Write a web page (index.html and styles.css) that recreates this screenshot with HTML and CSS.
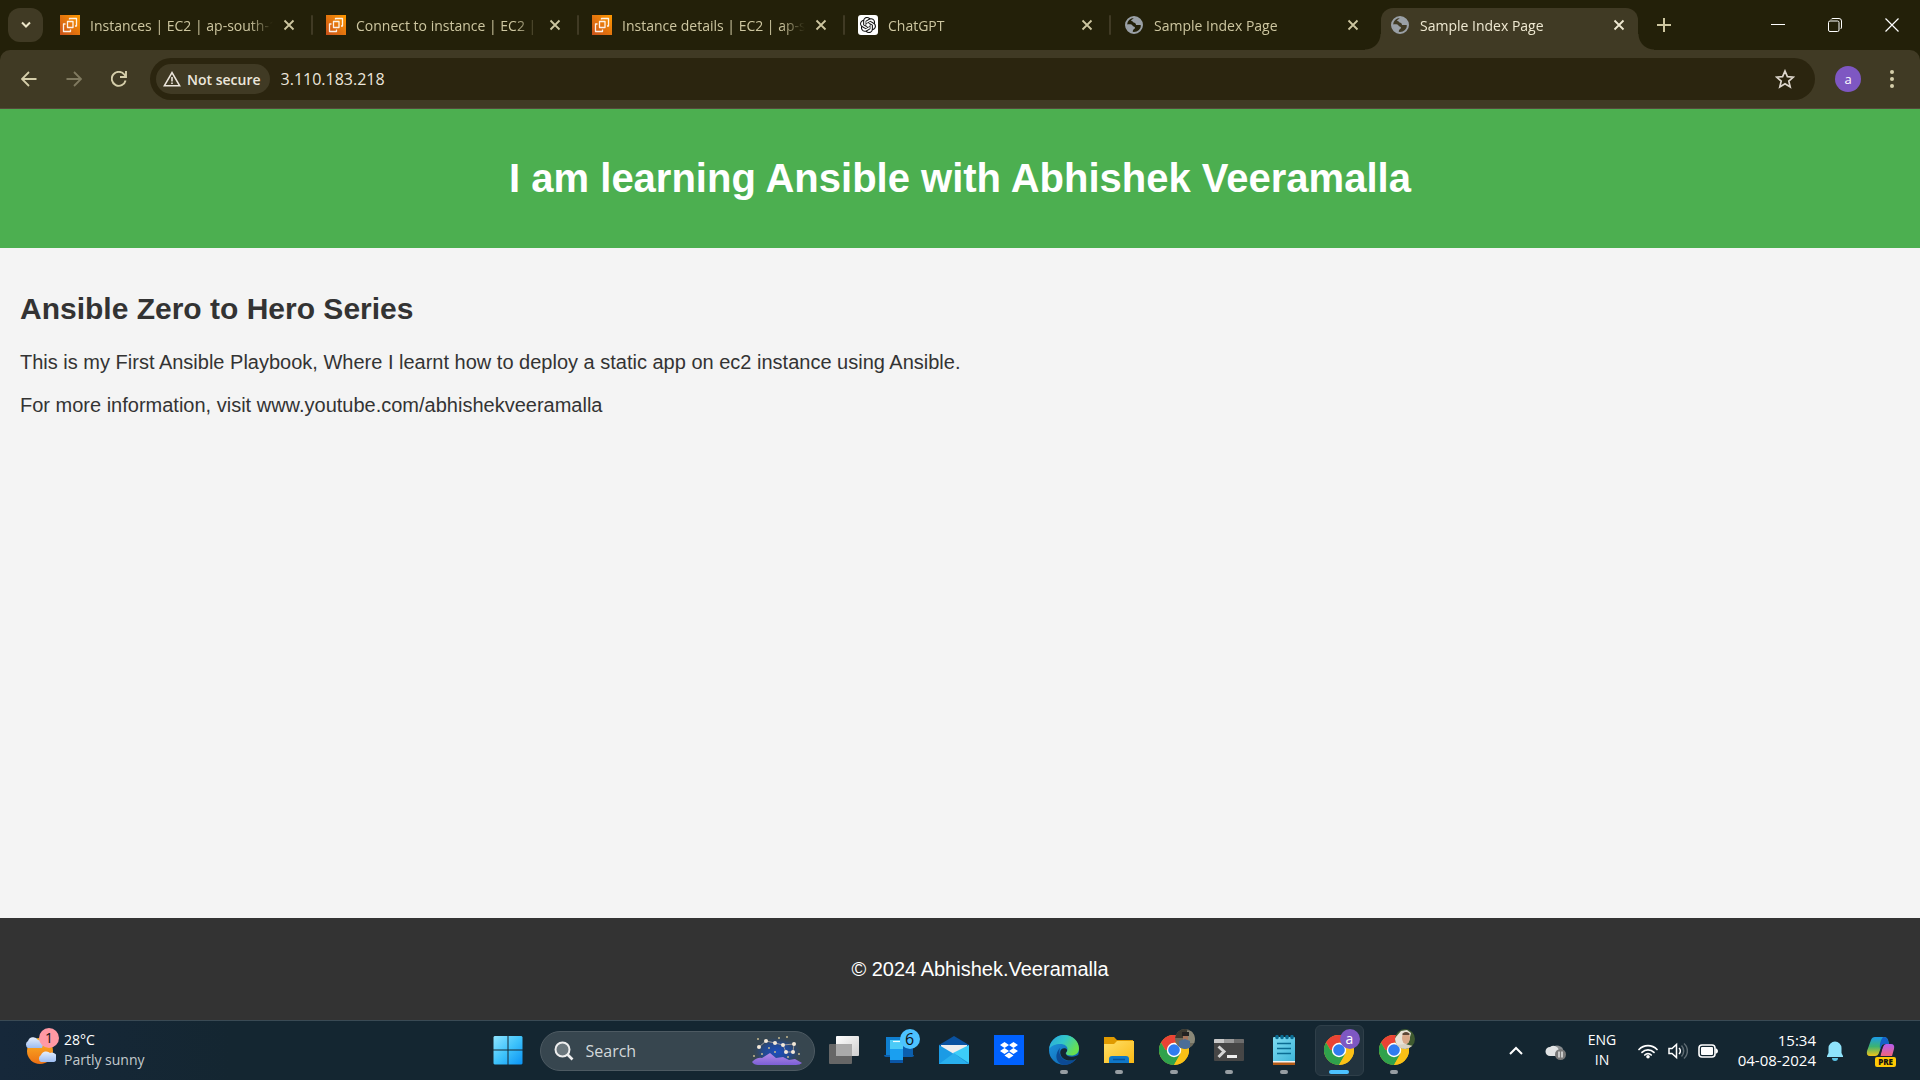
FILE: index.html
```html
<!DOCTYPE html>
<html lang="en">
<head>
<meta charset="utf-8">
<meta name="viewport" content="width=device-width, initial-scale=1">
<title>Sample Index Page</title>
<link rel="stylesheet" href="styles.css">
</head>
<body>
<svg class="defs" aria-hidden="true">
  <defs>
    <linearGradient id="gAws" x1="0" y1="1" x2="1" y2="0"><stop offset="0" stop-color="#c8511b"/><stop offset="1" stop-color="#ff9900"/></linearGradient>
    <linearGradient id="gWin" x1="0" y1="0" x2="1" y2="1"><stop offset="0" stop-color="#8fe4ff"/><stop offset=".5" stop-color="#3fc3fb"/><stop offset="1" stop-color="#0a93f5"/></linearGradient>
    <linearGradient id="gSun" x1="0" y1="0" x2="0" y2="1"><stop offset="0" stop-color="#fcb827"/><stop offset="1" stop-color="#ee7013"/></linearGradient>
    <linearGradient id="gCloud" x1="0" y1="0" x2="0" y2="1"><stop offset="0" stop-color="#e6effc"/><stop offset="1" stop-color="#9dbdf2"/></linearGradient>
    <linearGradient id="gWhite" x1="0" y1="0" x2="1" y2="1"><stop offset="0" stop-color="#fff"/><stop offset="1" stop-color="#cfcfcf"/></linearGradient>
    <linearGradient id="gHill" x1="0" y1="0" x2="0" y2="1"><stop offset="0" stop-color="#b48be8"/><stop offset="1" stop-color="#7c5fd6"/></linearGradient>
    <radialGradient id="gNight"><stop offset="0" stop-color="#1d4fc0"/><stop offset=".55" stop-color="#204a9c" stop-opacity=".8"/><stop offset="1" stop-color="#37474f" stop-opacity="0"/></radialGradient>
    <linearGradient id="gEdgeTop" x1="0" y1="0" x2="1" y2=".5"><stop offset="0" stop-color="#2aa5e0"/><stop offset=".5" stop-color="#32c7c9"/><stop offset="1" stop-color="#68e04f"/></linearGradient>
    <linearGradient id="gEdgeLow" x1="0" y1="0" x2="1" y2="1"><stop offset="0" stop-color="#1f9be3"/><stop offset="1" stop-color="#0b5ca8"/></linearGradient>
    <linearGradient id="gFolder" x1="0" y1="0" x2="1" y2="1"><stop offset="0" stop-color="#ffdf67"/><stop offset="1" stop-color="#fbb914"/></linearGradient>
    <linearGradient id="gNote" x1="0" y1="0" x2="1" y2="1"><stop offset="0" stop-color="#7fdcf2"/><stop offset="1" stop-color="#3fb5d8"/></linearGradient>
    <linearGradient id="gPilotA" x1="0" y1="0" x2="0" y2="1"><stop offset="0" stop-color="#1b9be8"/><stop offset=".5" stop-color="#3cb371"/><stop offset="1" stop-color="#f2c318"/></linearGradient>
    <linearGradient id="gPilotB" x1="0" y1="0" x2="0" y2="1"><stop offset="0" stop-color="#b45cf0"/><stop offset="1" stop-color="#f0647a"/></linearGradient>
    <clipPath id="faceClip"><circle cx="10" cy="10" r="10"/></clipPath>
    <symbol id="ec2" viewBox="0 0 20 20"><path fill="url(#gAws)" d="M0 0h20v20H0z"/><g fill="none" stroke="#fff" stroke-width="1.3" stroke-linejoin="round" opacity=".9"><path d="M7.500 6.500h5.500v6H7.500z"/><path d="M9.500 4.500v-1h7v7.500h-1.500M5.500 9H3.500v7.500h7v-2"/></g></symbol>
    <symbol id="globe" viewBox="0 0 20 20"><circle cx="10" cy="10" r="8" fill="none" stroke="#9aa0a6" stroke-width="2"/><path fill="#9aa0a6" d="M10 2.500c-1 1.500-2 2-3 3 .5 1 2 .5 2.500 2 1.500.2 2.500 1 2.500 2.500h3.500c1 0 1.500.5 2 1A8 8 0 0 0 10 2zM2.500 9.500c3-.5 5.500-.3 6 1 .2 1.200 2.500.8 2.500 2.200 0 1.300-1.600 1.300-2 2.600L8.500 18A8 8 0 0 1 2.500 9.500z"/></symbol>
    <symbol id="x" viewBox="0 0 12 12"><path d="M1.500 1.500l9 9M10.500 1.500l-9 9" fill="none" stroke="currentColor" stroke-width="1.800"/></symbol>
    <symbol id="chrome" viewBox="0 0 30 30"><circle cx="15" cy="15" r="15" fill="#fbc116"/><path fill="#ea4335" d="M15 15 2 7.500A15 15 0 0 1 28 7.500H15z"/><path fill="#ea4335" d="M2 7.500 8.500 18.700 15 7.500z"/><path fill="#2fa24c" d="M2 7.500A15 15 0 0 0 15 30l6.500-11.300L15 15H6.400z"/><path fill="#fbc116" d="M15 30 21.500 18.700V7.500H28A15 15 0 0 1 15 30z"/><circle cx="15" cy="15" r="7.200" fill="#fff"/><circle cx="15" cy="15" r="5.800" fill="#2f7cf0"/></symbol>
  </defs>
</svg>

<header class="browser">
  <div class="tabstrip">
    <button class="tab-search" aria-label="Search tabs"><svg width="12" height="8" viewBox="0 0 12 8"><path d="M2 1.500l4 4 4-4" fill="none" stroke="currentColor" stroke-width="2"/></svg></button>
    <div class="tab"><svg class="fav"><use href="#ec2"/></svg><button class="title">Instances | EC2 | ap-south-1</button><button class="close" aria-label="Close tab"><svg><use href="#x"/></svg></button></div>
    <div class="tab"><svg class="fav"><use href="#ec2"/></svg><button class="title">Connect to instance | EC2 | ap-south-1</button><button class="close" aria-label="Close tab"><svg><use href="#x"/></svg></button></div>
    <div class="tab"><svg class="fav"><use href="#ec2"/></svg><button class="title">Instance details | EC2 | ap-south-1</button><button class="close" aria-label="Close tab"><svg><use href="#x"/></svg></button></div>
    <div class="tab"><svg class="fav" viewBox="0 0 20 20"><rect width="20" height="20" rx="3" fill="#fff"/><g transform="translate(2 2) scale(.6667)"><path fill="#111" d="M22.2819 9.8211a5.9847 5.9847 0 0 0-.5157-4.9108 6.0462 6.0462 0 0 0-6.5098-2.9A6.0651 6.0651 0 0 0 4.9807 4.1818a5.9847 5.9847 0 0 0-3.9977 2.9 6.0462 6.0462 0 0 0 .7427 7.0966 5.98 5.98 0 0 0 .511 4.9107 6.051 6.051 0 0 0 6.5146 2.9001A5.9847 5.9847 0 0 0 13.2599 24a6.0557 6.0557 0 0 0 5.7718-4.2058 5.9894 5.9894 0 0 0 3.9977-2.9001 6.0557 6.0557 0 0 0-.7475-7.0729zm-9.022 12.6081a4.4755 4.4755 0 0 1-2.8764-1.0408l.1419-.0804 4.7783-2.7582a.7948.7948 0 0 0 .3927-.6813v-6.7369l2.02 1.1686a.071.071 0 0 1 .038.052v5.5826a4.504 4.504 0 0 1-4.4945 4.4944zm-9.6607-4.1254a4.4708 4.4708 0 0 1-.5346-3.0137l.142.0852 4.783 2.7582a.7712.7712 0 0 0 .7806 0l5.8428-3.3685v2.3324a.0804.0804 0 0 1-.0332.0615L9.74 19.9502a4.4992 4.4992 0 0 1-6.1408-1.6464zM2.3408 7.8956a4.485 4.485 0 0 1 2.3655-1.9728V11.6a.7664.7664 0 0 0 .3879.6765l5.8144 3.3543-2.0201 1.1685a.0757.0757 0 0 1-.071 0l-4.8303-2.7865A4.504 4.504 0 0 1 2.3408 7.872zm16.5963 3.8558L13.1038 8.364 15.1192 7.2a.0757.0757 0 0 1 .071 0l4.8303 2.7913a4.4944 4.4944 0 0 1-.6765 8.1042v-5.6772a.79.79 0 0 0-.407-.667zm2.0107-3.0231l-.142-.0852-4.7735-2.7818a.7759.7759 0 0 0-.7854 0L9.409 9.2297V6.8974a.0662.0662 0 0 1 .0284-.0615l4.8303-2.7866a4.4992 4.4992 0 0 1 6.6802 4.66zM8.3065 12.863l-2.02-1.1638a.0804.0804 0 0 1-.038-.0567V6.0742a4.4992 4.4992 0 0 1 7.3757-3.4537l-.142.0805L8.704 5.459a.7948.7948 0 0 0-.3927.6813zm1.0976-2.3654l2.602-1.4998 2.6069 1.4998v2.9994l-2.5974 1.4997-2.6067-1.4997Z"/></g></svg><button class="title">ChatGPT</button><button class="close" aria-label="Close tab"><svg><use href="#x"/></svg></button></div>
    <div class="tab"><svg class="fav"><use href="#globe"/></svg><button class="title">Sample Index Page</button><button class="close" aria-label="Close tab"><svg><use href="#x"/></svg></button></div>
    <div class="tab active"><svg class="fav"><use href="#globe"/></svg><button class="title">Sample Index Page</button><button class="close" aria-label="Close tab"><svg><use href="#x"/></svg></button></div>
    <button class="new-tab" aria-label="New tab"><svg width="14" height="14" viewBox="0 0 14 14"><path d="M7 0v14M0 7h14" stroke="currentColor" stroke-width="2"/></svg></button>
    <div class="window-buttons">
      <button aria-label="Minimize"><svg width="14" height="14" viewBox="0 0 14 14"><path d="M0 6.500h14" stroke="currentColor"/></svg></button>
      <button aria-label="Restore"><svg width="14" height="14" viewBox="0 0 14 14" fill="none" stroke="currentColor"><rect x=".5" y="3" width="10.500" height="10.500" rx="1.500"/><path d="M3 1.500Q3.500.5 5 .5h6q2.500 0 2.500 2.500v6q0 1.500-1 2"/></svg></button>
      <button aria-label="Close"><svg width="14" height="14" viewBox="0 0 14 14"><path d="M.5.5l13 13M13.500.5l-13 13" stroke="currentColor" stroke-width="1.200"/></svg></button>
    </div>
  </div>
  <div class="toolbar">
    <div class="nav">
      <button aria-label="Back"><svg width="16" height="16" viewBox="0 0 16 16" fill="none" stroke="currentColor" stroke-width="1.800"><path d="M15.500 8H1.500M8 1L1 8l7 7"/></svg></button>
      <button class="off" aria-label="Forward" disabled><svg width="16" height="16" viewBox="0 0 16 16" fill="none" stroke="currentColor" stroke-width="1.800"><path d="M.5 8h14M8 1l7 7-7 7"/></svg></button>
      <button aria-label="Reload"><svg width="16" height="16" viewBox="0 0 16 16" fill="none" stroke="currentColor" stroke-width="1.900"><path d="M14.600 9.500A7 7 0 1 1 13.300 3.500L15 5.600M15 0v6H9"/></svg></button>
    </div>
    <div class="omnibox">
      <button class="chip"><svg width="18" height="16" viewBox="0 0 18 16" fill="none" stroke="currentColor" stroke-width="1.600"><path d="M9 1.600L1.400 14.700h15.200z"/><path d="M9 6v4.500M9 11.500v1.500"/></svg><span>Not secure</span></button>
      <input type="text" aria-label="Address" value="3.110.183.218">
      <button class="star" aria-label="Bookmark"><svg width="20" height="20" viewBox="0 0 20 20"><path d="M10 2l2.400 5.600 6 .5-4.600 4 1.400 5.900L10 14.800 4.800 18l1.400-5.900-4.600-4 6-.5z" fill="none" stroke="currentColor" stroke-width="1.700"/></svg></button>
    </div>
    <button class="avatar" aria-label="Profile">a</button>
    <button class="menu" aria-label="Menu"><svg width="4" height="18" viewBox="0 0 4 18" fill="currentColor"><circle cx="2" cy="2" r="2"/><circle cx="2" cy="9" r="2"/><circle cx="2" cy="16" r="2"/></svg></button>
  </div>
</header>

<div class="site">
  <header class="banner"><h1>I am learning Ansible with Abhishek Veeramalla</h1></header>
  <main class="content">
    <h2>Ansible Zero to Hero Series</h2>
    <p>This is my First Ansible Playbook, Where I learnt how to deploy a static app on ec2 instance using Ansible.</p>
    <p>For more information, visit www.youtube.com/abhishekveeramalla</p>
  </main>
  <footer class="foot"><p>© 2024 Abhishek.Veeramalla</p></footer>
</div>

<nav class="taskbar" aria-label="Taskbar">
  <button class="weather">
    <span class="weather-icon"><svg width="32" height="30" viewBox="0 0 32 30"><circle cx="16" cy="15" r="13" fill="url(#gSun)"/><path fill="url(#gCloud)" d="M4 12a4 4 0 0 1 0-7 5.500 5.500 0 0 1 10-1 5 5 0 0 1 4 8z"/><path fill="url(#gCloud)" d="M17 26a4 4 0 0 1 0-7 5.500 5.500 0 0 1 9-2 4.700 4.700 0 0 1 4 9z"/></svg><span class="badge pink">1</span></span>
    <span class="two-lines"><span>28°C</span><span class="dim">Partly sunny</span></span>
  </button>

  <div class="apps">
    <button class="app" aria-label="Start"><svg width="30" height="30" viewBox="0 0 30 30"><path fill="url(#gWin)" d="M1.500 1h13v13.500h-14V2zM15.500 1h13l1 1v12.500h-14zM.5 15.500h14v14h-13l-1-1zM15.500 15.500h14v13l-1 1h-13z"/></svg></button>
    <label class="search">
      <svg width="20" height="20" viewBox="0 0 20 20"><circle cx="8.500" cy="8.500" r="7" fill="#6b777d" stroke="#eee" stroke-width="2"/><path d="M13.500 13.500l5 5" stroke="#eee" stroke-width="2.600"/></svg>
      <input type="search" placeholder="Search" aria-label="Search">
      <svg class="stars" width="52" height="32" viewBox="0 0 52 32"><ellipse cx="26" cy="17" rx="26" ry="16" fill="url(#gNight)"/><path fill="url(#gHill)" d="M1 27q5-5 10-4l8-5 6 5 7-1 6 3 6-1 7 4q-2 2-6 2H7q-4 0-6-3z"/><path d="M8 12l7-6 9 2 8 2 11-1-1 8h-7l-3-7" fill="none" stroke="#b8aba0" stroke-width=".8"/><g fill="#f5e9d8"><circle cx="8" cy="12" r="2"/><circle cx="15" cy="6" r="2"/><circle cx="24" cy="8" r="2"/><circle cx="32" cy="10" r="2"/><circle cx="43" cy="9" r="2"/><circle cx="42" cy="17" r="2"/><circle cx="35" cy="17" r="2"/></g><g fill="#c5b98f"><circle cx="7" cy="4" r="1"/><circle cx="28" cy="3" r="1"/><circle cx="36" cy="2" r="1"/><circle cx="18" cy="13" r="1"/><circle cx="24" cy="17" r="1"/><circle cx="48" cy="19" r="1"/><circle cx="3" cy="21" r="1"/><circle cx="11" cy="19" r="1"/><circle cx="37" cy="22" r="1"/></g></svg>
    </label>
    <button class="app" aria-label="Task view"><svg width="30" height="30" viewBox="0 0 30 30"><rect y="9" width="23" height="20" rx="1" fill="#666"/><rect x="7" y="1" width="23" height="20" rx="1" fill="url(#gWhite)"/><path d="M7 9h16v12H7z" fill="#aaa"/></svg></button>
    <button class="app" aria-label="Phone Link"><svg width="30" height="30" viewBox="0 0 30 30"><path fill="#0f7fd0" d="M2 2h27v19H2z"/><path fill="#0b5fae" d="M18 2h11v19H18zM0 20h30q0 2-2 2H2q-2 0-2-2z"/><path fill="#1a9ff0" d="M6 5h13v23H6z"/><path fill="#4ccbf7" d="M6 5h13v9H6z"/><path fill="#0a55a5" d="M6 25h13v3H6z"/><path d="M9 6.500h7" stroke="#eafaff" stroke-width="1.200"/></svg><span class="badge blue">6</span></button>
    <button class="app" aria-label="Mail"><svg width="30" height="30" viewBox="0 0 30 30"><path fill="#0a52a0" d="M0 10L15 1l15 9v6H0z"/><path fill="#eee" d="M2 10h26v5L15 22 2 15z"/><path fill="#1b9be5" d="M0 10l15 9-1 10H0z"/><path fill="#3ccdf8" d="M30 10v19L14 18z"/><path fill="#29b0ee" d="M0 29l15-11 15 11z"/><path fill="#1c92d8" d="M15 18.500L30 29V28z"/></svg></button>
    <button class="app" aria-label="Dropbox"><svg width="30" height="30" viewBox="0 0 30 30"><path fill="#0061ff" d="M0 0h30v30H0z"/><path fill="#fff" d="M10.500 7l4.500 3-4.500 3L6 10zM19.500 7l4.500 3-4.500 3-4.500-3zM10.500 13l4.500 3-4.500 3L6 16zM19.500 13l4.500 3-4.500 3-4.500-3zM15 17.500l4.500 3-4.500 3-4.500-3z"/></svg></button>
    <button class="app run" aria-label="Edge"><svg width="30" height="30" viewBox="0 0 30 30"><circle cx="15" cy="15" r="15" fill="url(#gEdgeLow)"/><path fill="url(#gEdgeTop)" d="M.5 12C2 5 8 0 15 0c8.500 0 15 6 15 13.500 0 4.500-3.500 7-7.500 7-3.500 0-5.500-1-5.500-2.300 0-.9 1.500-1.600 1.500-4 0-3-3-5.200-7-5.200C6.500 9 2 10.500.5 14z"/><path fill="#0c4a94" d="M11 13c-2 5 1 12 8 13 3 .3 6-.7 8-2.500C24 28 20 30 15 30 9 29 6 23.500 8 18c.7-2 1.600-3.800 3-5z"/><path fill="#142631" d="M11.200 17c.2-2.300 2-4 4.500-3.800 1.800.2 2.800 1.300 2.300 2.800-.4 1-1.500 1.500-1.200 2.700.5 2 3 3 6 3 3.200 0 5.200-1 6.200-1.700l.7 1.600c-1.500 2-5 4-8.500 4-5.500 0-10.300-3.500-10-8.600z"/></svg></button>
    <button class="app run" aria-label="File Explorer"><svg width="30" height="30" viewBox="0 0 30 30"><path fill="#e09a00" d="M0 2h10l3 3h16v6H0z"/><path fill="url(#gFolder)" d="M0 9h10l3-3h17v22H0z"/><path fill="#0f78c8" d="M5 28v-4q0-3 3-3h14q3 0 3 3v4z"/><path d="M9 24.500h12" stroke="#08529a" stroke-width="1.500"/></svg></button>
    <button class="app run" aria-label="Chrome"><svg width="30" height="30"><use href="#chrome"/></svg><svg class="face" viewBox="0 0 20 20"><g clip-path="url(#faceClip)"><path fill="#6e6a5c" d="M0 0h20v20H0z"/><path fill="#3b3930" d="M0 0h12v9H0z"/><path fill="#8a8878" d="M12 2h8v12h-8z"/><path fill="#a5745a" d="M8 5h5v6H8z"/><path fill="#222" d="M7 3h7v4H7z"/><path fill="#4c6d97" d="M4 12l6-2 5 2v8H4z"/></g></svg></button>
    <button class="app run" aria-label="Terminal"><svg width="30" height="30" viewBox="0 0 30 30"><rect y="4" width="30" height="22" rx="1" fill="#464646"/><path fill="#c9c9c9" d="M0 5q0-1 1-1h9v4H0z"/><path fill="#9a9a9a" d="M10 4h10v4H10z"/><path fill="#6d6d6d" d="M20 4h9q1 0 1 1v3H20z"/><path d="M4.500 11.500l5.500 5-5.500 5.500" fill="none" stroke="#d4d4d4" stroke-width="3"/><path fill="#eee" d="M13 20h10v3H13z"/></svg></button>
    <button class="app run" aria-label="Notepad"><svg width="30" height="30" viewBox="0 0 30 30"><path fill="#b35a16" d="M4 26h22v4H4z"/><path fill="#f2f2f2" d="M4 24h22v3.500H4z"/><path fill="url(#gNote)" d="M4 3q0-1 1-1h20q1 0 1 1v23H4z"/><path d="M8 8.500h14M8 13.500h14M8 18.500h14" stroke="#0b6c92" stroke-width="1.700"/><g fill="#0b6c92"><ellipse cx="8" cy="2" rx="1.800" ry="2.200"/><ellipse cx="13" cy="2" rx="1.800" ry="2.200"/><ellipse cx="18" cy="2" rx="1.800" ry="2.200"/><ellipse cx="23" cy="2" rx="1.800" ry="2.200"/></g></svg></button>
    <button class="app run current" aria-label="Chrome, profile a"><svg width="30" height="30"><use href="#chrome"/></svg><span class="badge purple">a</span></button>
    <button class="app run" aria-label="Chrome"><svg width="30" height="30"><use href="#chrome"/></svg><svg class="face" viewBox="0 0 20 20"><g clip-path="url(#faceClip)"><path fill="#3f5a30" d="M0 0h20v20H0z"/><path fill="#e8e2d6" d="M0 9l6-7 6-1 4 3-2 8-6 8H0z"/><ellipse cx="11" cy="9" rx="4" ry="6" fill="#d9a888"/><path fill="#5c4636" d="M7 5q4-4 8 0l-1 1H8z"/><path fill="#d8d2c4" d="M2 16l8-1 8 2v4H2z"/></g></svg></button>
  </div>

  <div class="tray">
    <button class="tray-icon" aria-label="Hidden icons"><svg width="14" height="10" viewBox="0 0 14 10"><path d="M1 8l6-6 6 6" fill="none" stroke="#fff" stroke-width="2"/></svg></button>
    <button class="tray-icon cloud" aria-label="OneDrive"><svg width="22" height="20" viewBox="0 0 22 20"><path fill="#8b8f92" d="M6 8a7 7 0 0 1 12 0l1 6H8z"/><path fill="#e1e3e4" d="M5 15a4.500 4.500 0 0 1 0-9 6 6 0 0 1 5-1q3 1 4 4l-3 6z"/><circle cx="15.500" cy="13.500" r="5.500" fill="#787878"/><path d="M14 10.500v6M17 10.500v6" stroke="#fff" stroke-width="1.200"/></svg></button>
    <button class="lang two-lines"><span>ENG</span><span>IN</span></button>
    <button class="status" aria-label="Network, volume, battery">
      <svg width="20" height="16" viewBox="0 0 20 16"><g fill="none" stroke="#fff" stroke-width="1.700" stroke-linecap="round"><path d="M1 6.500a12.500 12.500 0 0 1 18 0M4 9.300a8.500 8.500 0 0 1 12 0M6.800 12a4.500 4.500 0 0 1 6.400 0"/></g><circle cx="10" cy="13.800" r="1.800" fill="#fff"/></svg>
      <svg width="20" height="18" viewBox="0 0 20 18" fill="none" stroke-width="1.500"><path d="M1 6.500h3L8.500 2.500v13L4 11.500H1z" stroke="#fff"/><path d="M11 6a4 4 0 0 1 0 6" stroke="#fff"/><path d="M13.500 3.500a8 8 0 0 1 0 11M16 1.500a10 10 0 0 1 0 15" stroke="#5f6c73"/></svg>
      <svg width="20" height="14" viewBox="0 0 20 14"><rect x="1" y="1" width="16" height="12" rx="3" fill="none" stroke="#fff" stroke-width="1.600"/><rect x="3" y="3" width="12" height="8" rx="1" fill="#fff"/><path d="M17.500 4.500h1q1.500 1 1.500 2.500t-1.500 2.500h-1z" fill="#fff"/></svg>
    </button>
    <button class="clock two-lines"><span>15:34</span><span>04-08-2024</span></button>
    <button class="bell" aria-label="Notifications"><svg width="18" height="20" viewBox="0 0 18 20"><path fill="#8fe3fb" d="M9 .5a6.500 6.500 0 0 1 6.500 6.500v5l1.500 3v1H1v-1l1.500-3V7A6.500 6.500 0 0 1 9 .5z"/><path fill="#5cc4e6" d="M6 17h6a3 3 0 0 1-6 0z"/></svg></button>
    <button class="copilot" aria-label="Copilot"><svg width="30" height="30" viewBox="0 0 30 30"><path fill="url(#gPilotA)" d="M9 1h9q3 0 4 3l1 4h-5q-2 0-3 3l-2 6q-1 3-4 3H4q-4 0-3-5L5 4q1-3 4-3z"/><path fill="#1460c8" d="M17 1q4 0 5 3l1 4h-5q-2 0-3 3l-1 3q-1-8 3-13z"/><path fill="url(#gPilotB)" d="M20 8h5q4 0 3 5l-2 7H14l3-9q1-3 3-3z"/><path fill="#142631" d="M15 13l1.500-2-2 9H12z"/></svg><span class="pre">PRE</span></button>
  </div>
</nav>
</body>
</html>
```

FILE: styles.css
```css
* { box-sizing: border-box; }

body {
  margin: 0;
  min-height: 100vh;
  display: flex;
  flex-direction: column;
  font-family: "Open Sans", "Noto Sans", sans-serif;
  font-size: 14px;
  background: #f4f4f4;
}

button, input { font: inherit; color: inherit; background: none; border: 0; padding: 0; margin: 0; outline: 0; }
button { display: flex; align-items: center; justify-content: center; }
svg { display: block; flex: none; }
.defs { position: absolute; width: 0; height: 0; }

/* Browser frame */
.browser { background: #232009; }
.tabstrip { display: flex; height: 50px; padding-left: 8px; color: #cdc6a0; }
.tab-search { width: 35px; height: 34px; margin: 8px 4px 0 0; border-radius: 12px; background: #403a24; color: #ece6c8; }
.tab {
  position: relative;
  display: flex;
  align-items: center;
  flex: 0 1 266px;
  min-width: 0;
  padding: 0 14px 0 13px;
}
.tab::after { content: ""; position: absolute; right: 0; top: 15px; width: 2px; height: 20px; background: #403a24; border-radius: 1px; }
.tab:nth-child(6)::after { display: none; }
.fav { width: 20px; height: 20px; margin-right: 10px; }
.title {
  flex: 1;
  min-width: 0;
  justify-content: flex-start;
  overflow: hidden;
  white-space: nowrap;
  height: 30px;
  -webkit-mask-image: linear-gradient(to left, transparent, #000 24px);
  mask-image: linear-gradient(to left, transparent, #000 24px);
}
.close { width: 20px; height: 20px; margin-left: 6px; }
.close svg { width: 12px; height: 12px; }
.active { color: #efe9d2; }
.active::before {
  content: "";
  position: absolute;
  inset: 8px 5px 0 4px;
  background: #403a24;
  border-radius: 12px 12px 0 0;
}
.tab.active::after {
  inset: auto -11px 0 -12px;
  width: auto;
  height: 16px;
  border-radius: 0;
  background:
    radial-gradient(circle at 0 0, transparent 15px, #403a24 16px) left / 16px 16px no-repeat,
    radial-gradient(circle at 100% 0, transparent 15px, #403a24 16px) right / 16px 16px no-repeat;
}
.active > * { position: relative; z-index: 1; }
.new-tab { width: 40px; margin-left: 1px; }
.window-buttons { display: flex; margin-left: auto; color: #fff; }
.window-buttons button { width: 57px; }

.toolbar {
  display: flex;
  align-items: center;
  height: 59px;
  padding: 0 10px 0 6px;
  background: #403a24;
  border-bottom: 1px solid #55493a;
  border-radius: 10px 10px 0 0;
  color: #d5ceaa;
}
.nav { display: flex; }
.nav button { width: 45px; height: 36px; }
.nav .off { color: #807a60; }
.omnibox {
  display: flex;
  align-items: center;
  flex: 1;
  height: 42px;
  margin-left: 9px;
  padding: 0 20px 0 6px;
  border-radius: 21px;
  background: #2b250f;
  color: #ece6dc;
}
.chip { gap: 6px; height: 30px; padding: 0 9px 0 7px; border-radius: 15px; background: #403a24; font-weight: 600; }
.omnibox input { flex: 1; min-width: 0; margin-left: 11px; font-size: 16px; }
.star { color: #ddd6cc; }
.avatar { width: 26px; height: 26px; margin-left: 20px; border-radius: 50%; background: #7e57c2; color: #fff; font-size: 13px; }
.menu { width: 36px; height: 36px; margin-left: 13px; }

/* Web page */
.site {
  flex: 1;
  display: flex;
  flex-direction: column;
  font-family: "Liberation Sans", Arial, sans-serif;
  font-size: 20px;
  color: #333;
}
.banner { padding: 20px; background: #4caf50; color: #fff; text-align: center; }
.banner h1 { margin: 27px 0; font-size: 40px; line-height: 45px; }
.content { flex: 1; padding: 20px; }
.content h2 { margin: 24px 0 25px; font-size: 30px; line-height: 34px; }
.content p, .foot p { margin: 20px 0; line-height: 23px; }
.foot { padding: 20px 0 20px 40px; background: #333; color: #fff; text-align: center; }
.foot p { margin: 20px 0 19px; }

/* Taskbar */
.taskbar {
  display: grid;
  grid-template-columns: minmax(0, 1fr) auto minmax(0, 1fr);
  height: 60px;
  border-top: 1px solid #3a4a54;
  background: linear-gradient(90deg, #16283a, #142631 12%, #142631);
  color: #fff;
}
.two-lines { display: flex; flex-direction: column; line-height: 20px; padding-bottom: 2px; white-space: nowrap; }
.dim { color: #c3cacd; }
.weather { justify-content: flex-start; padding-left: 24px; gap: 8px; text-align: left; }
.weather-icon { position: relative; }
.badge {
  position: absolute;
  width: 20px;
  height: 20px;
  border-radius: 50%;
  line-height: 20px;
  text-align: center;
  font-size: 14px;
  color: #111;
}
.pink { top: -8px; right: -3px; background: #ff99a4; }
.blue { top: 8px; right: 7px; background: #4cc2ff; font-size: 16px; }
.purple { top: 8px; right: 7px; background: #7e57c2; color: #fff; }
.face { position: absolute; top: 8px; right: 7px; width: 20px; height: 20px; }
.apps { display: flex; align-items: center; padding-right: 18px; }
.app { position: relative; width: 55px; height: 59px; padding-bottom: 1px; }
.run::after {
  content: "";
  position: absolute;
  bottom: 6px;
  left: 50%;
  width: 8px;
  height: 4px;
  margin-left: -4px;
  border-radius: 2px;
  background: #979ea3;
}
.current::before {
  content: "";
  position: absolute;
  inset: 4px 3px;
  border: 1px solid #2f3f49;
  border-radius: 6px;
  background: #22333e;
}
.current svg { position: relative; }
.current::after { width: 20px; margin-left: -10px; background: #4cc2ff; }
.search {
  display: flex;
  align-items: center;
  gap: 12px;
  width: 275px;
  height: 40px;
  margin: 0 2px 0 4px;
  padding: 0 11px 0 13px;
  border: 1px solid #4d5a62;
  border-radius: 20px;
  background: #37464f;
}
.search input { flex: 1; min-width: 0; font-size: 16px; }
.search input::placeholder { color: #d3d8da; opacity: 1; }
.tray { display: flex; align-items: center; justify-content: flex-end; padding-right: 24px; }
.tray button { height: 59px; }
.tray-icon { width: 40px; }
.lang { width: 52px; }
.status { gap: 10px; padding: 0 10px; }
.clock { align-items: flex-end; width: 88px; font-size: 15px; }
.bell { width: 38px; }
.copilot { position: relative; margin-left: 12px; }
.pre {
  position: absolute;
  right: 0;
  bottom: 13px;
  padding: 0 3px;
  border-radius: 2px;
  background: #ffc905;
  color: #111;
  font-size: 8px;
  line-height: 10px;
  font-weight: 800;
}
```
